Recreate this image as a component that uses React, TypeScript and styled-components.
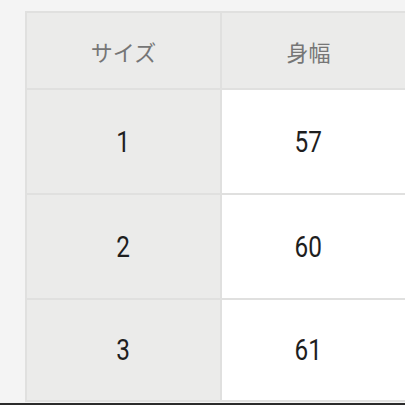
import styled, { createGlobalStyle } from 'styled-components';

const GlobalStyle = createGlobalStyle`
  html, body {
    margin: 0;
    padding: 0;
    background: #f4f4f4;
    overflow: hidden;
  }
  body {
    width: 405px;
    height: 405px;
  }
`;

const Page = styled.div`
  width: 405px;
  height: 405px;
  overflow: hidden;
  display: flex;
  flex-direction: column;
  padding: 11px 0 0 25px;
  box-sizing: border-box;
  position: relative;
`;

const SizeTable = styled.div`
  display: grid;
  grid-template-columns: 193px 193px;
  grid-template-rows: 75px 103px 103px 100px;
  gap: 2px;
  padding: 2px;
  width: max-content;
  background: #e0e0df;
`;

// shifted cells: second column content sits a bit left of the true middle
const Cell = styled.div<{ head?: boolean; light?: boolean; shifted?: boolean }>`
  display: flex;
  align-items: center;
  justify-content: center;
  padding-right: ${({ shifted }) => (shifted ? '20px' : '0')};
  background: ${({ light }) => (light ? '#ffffff' : '#ebebea')};
  color: ${({ head }) => (head ? '#767676' : '#1e1e1e')};
  font-family: "Noto Sans CJK JP", "Noto Sans", sans-serif;
  font-size: 22px;
`;

const Num = styled.span`
  display: inline-block;
  font-family: Roboto, "Noto Sans", sans-serif;
  font-size: 29px;
  transform: scaleX(0.84);
`;

const BottomEdge = styled.div`
  position: absolute;
  left: 0;
  right: 0;
  bottom: 0;
  height: 2px;
  background: #2b2b2b;
`;

const rows = [
  { size: '1', width: '57' },
  { size: '2', width: '60' },
  { size: '3', width: '61' },
];

export default function App() {
  return (
    <>
      <GlobalStyle />
      <Page>
        <SizeTable>
          <Cell head>サイズ</Cell>
          <Cell head shifted>
            身幅
          </Cell>
          {rows.map((r) => [
            <Cell key={`s${r.size}`}>
              <Num>{r.size}</Num>
            </Cell>,
            <Cell key={`w${r.size}`} light shifted>
              <Num>{r.width}</Num>
            </Cell>,
          ])}
        </SizeTable>
        <BottomEdge />
      </Page>
    </>
  );
}
